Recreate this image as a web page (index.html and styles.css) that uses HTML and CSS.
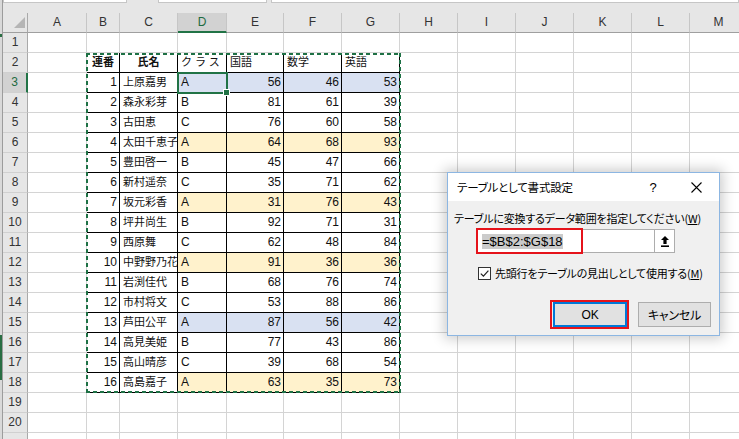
FILE: index.html
```html
<!DOCTYPE html>
<html lang="ja">
<head>
<meta charset="utf-8">
<title>テーブルとして書式設定</title>
<link rel="stylesheet" href="styles.css">
</head>
<body>
<div class="app">
  <div class="strip"></div>
  <div class="main">
    <div class="top">
      <div class="fbox fb1"></div>
      <div class="fbox fb2"></div>
      <div class="fbox fb3"></div>
    </div>
    <div class="sheet">
      <div class="row">
        <div class="corner"><svg width="11" height="11" viewBox="0 0 11 11"><path d="M11 0V11H0Z" fill="#b5b5b5"/></svg></div>
        <div class="ch">A</div><div class="ch">B</div><div class="ch">C</div><div class="ch sel">D</div><div class="ch">E</div><div class="ch">F</div><div class="ch">G</div><div class="ch">H</div><div class="ch">I</div><div class="ch">J</div><div class="ch">K</div><div class="ch">L</div><div class="ch">M</div>
      </div>
      <div class="row"><div class="rh">1</div><div class="c"></div><div class="c"></div><div class="c"></div><div class="c"></div><div class="c"></div><div class="c"></div><div class="c"></div><div class="c"></div><div class="c"></div><div class="c"></div><div class="c"></div><div class="c"></div><div class="c"></div></div>
      <div class="row"><div class="rh">2</div><div class="c"></div><div class="t j b">連番</div><div class="t j b">氏名</div><div class="t j k">クラス</div><div class="t j">国語</div><div class="t j">数学</div><div class="t j">英語</div><div class="c"></div><div class="c"></div><div class="c"></div><div class="c"></div><div class="c"></div><div class="c"></div></div>
      <div class="row"><div class="rh sel">3</div><div class="c"></div><div class="t n">1</div><div class="t j">上原嘉男</div><div class="t bl">A</div><div class="t n bl">56</div><div class="t n bl">46</div><div class="t n bl">53</div><div class="c"></div><div class="c"></div><div class="c"></div><div class="c"></div><div class="c"></div><div class="c"></div></div>
      <div class="row"><div class="rh">4</div><div class="c"></div><div class="t n">2</div><div class="t j">森永彩芽</div><div class="t">B</div><div class="t n">81</div><div class="t n">61</div><div class="t n">39</div><div class="c"></div><div class="c"></div><div class="c"></div><div class="c"></div><div class="c"></div><div class="c"></div></div>
      <div class="row"><div class="rh">5</div><div class="c"></div><div class="t n">3</div><div class="t j">古田恵</div><div class="t">C</div><div class="t n">76</div><div class="t n">60</div><div class="t n">58</div><div class="c"></div><div class="c"></div><div class="c"></div><div class="c"></div><div class="c"></div><div class="c"></div></div>
      <div class="row"><div class="rh">6</div><div class="c"></div><div class="t n">4</div><div class="t j">太田千恵子</div><div class="t or">A</div><div class="t n or">64</div><div class="t n or">68</div><div class="t n or">93</div><div class="c"></div><div class="c"></div><div class="c"></div><div class="c"></div><div class="c"></div><div class="c"></div></div>
      <div class="row"><div class="rh">7</div><div class="c"></div><div class="t n">5</div><div class="t j">豊田啓一</div><div class="t">B</div><div class="t n">45</div><div class="t n">47</div><div class="t n">66</div><div class="c"></div><div class="c"></div><div class="c"></div><div class="c"></div><div class="c"></div><div class="c"></div></div>
      <div class="row"><div class="rh">8</div><div class="c"></div><div class="t n">6</div><div class="t j">新村遥奈</div><div class="t">C</div><div class="t n">35</div><div class="t n">71</div><div class="t n">62</div><div class="c"></div><div class="c"></div><div class="c"></div><div class="c"></div><div class="c"></div><div class="c"></div></div>
      <div class="row"><div class="rh">9</div><div class="c"></div><div class="t n">7</div><div class="t j">坂元彩香</div><div class="t or">A</div><div class="t n or">31</div><div class="t n or">76</div><div class="t n or">43</div><div class="c"></div><div class="c"></div><div class="c"></div><div class="c"></div><div class="c"></div><div class="c"></div></div>
      <div class="row"><div class="rh">10</div><div class="c"></div><div class="t n">8</div><div class="t j">坪井尚生</div><div class="t">B</div><div class="t n">92</div><div class="t n">71</div><div class="t n">31</div><div class="c"></div><div class="c"></div><div class="c"></div><div class="c"></div><div class="c"></div><div class="c"></div></div>
      <div class="row"><div class="rh">11</div><div class="c"></div><div class="t n">9</div><div class="t j">西原舞</div><div class="t">C</div><div class="t n">62</div><div class="t n">48</div><div class="t n">84</div><div class="c"></div><div class="c"></div><div class="c"></div><div class="c"></div><div class="c"></div><div class="c"></div></div>
      <div class="row"><div class="rh">12</div><div class="c"></div><div class="t n">10</div><div class="t j">中野野乃花</div><div class="t or">A</div><div class="t n or">91</div><div class="t n or">36</div><div class="t n or">36</div><div class="c"></div><div class="c"></div><div class="c"></div><div class="c"></div><div class="c"></div><div class="c"></div></div>
      <div class="row"><div class="rh">13</div><div class="c"></div><div class="t n">11</div><div class="t j">岩渕佳代</div><div class="t">B</div><div class="t n">68</div><div class="t n">76</div><div class="t n">74</div><div class="c"></div><div class="c"></div><div class="c"></div><div class="c"></div><div class="c"></div><div class="c"></div></div>
      <div class="row"><div class="rh">14</div><div class="c"></div><div class="t n">12</div><div class="t j">市村将文</div><div class="t">C</div><div class="t n">53</div><div class="t n">88</div><div class="t n">86</div><div class="c"></div><div class="c"></div><div class="c"></div><div class="c"></div><div class="c"></div><div class="c"></div></div>
      <div class="row"><div class="rh">15</div><div class="c"></div><div class="t n">13</div><div class="t j">芦田公平</div><div class="t bl">A</div><div class="t n bl">87</div><div class="t n bl">56</div><div class="t n bl">42</div><div class="c"></div><div class="c"></div><div class="c"></div><div class="c"></div><div class="c"></div><div class="c"></div></div>
      <div class="row"><div class="rh">16</div><div class="c"></div><div class="t n">14</div><div class="t j">高見美姫</div><div class="t">B</div><div class="t n">77</div><div class="t n">43</div><div class="t n">86</div><div class="c"></div><div class="c"></div><div class="c"></div><div class="c"></div><div class="c"></div><div class="c"></div></div>
      <div class="row"><div class="rh">17</div><div class="c"></div><div class="t n">15</div><div class="t j">高山晴彦</div><div class="t">C</div><div class="t n">39</div><div class="t n">68</div><div class="t n">54</div><div class="c"></div><div class="c"></div><div class="c"></div><div class="c"></div><div class="c"></div><div class="c"></div></div>
      <div class="row"><div class="rh">18</div><div class="c"></div><div class="t n">16</div><div class="t j">高島嘉子</div><div class="t or">A</div><div class="t n or">63</div><div class="t n or">35</div><div class="t n or">73</div><div class="c"></div><div class="c"></div><div class="c"></div><div class="c"></div><div class="c"></div><div class="c"></div></div>
      <div class="row"><div class="rh">19</div><div class="c"></div><div class="c"></div><div class="c"></div><div class="c"></div><div class="c"></div><div class="c"></div><div class="c"></div><div class="c"></div><div class="c"></div><div class="c"></div><div class="c"></div><div class="c"></div><div class="c"></div></div>
      <div class="row"><div class="rh">20</div><div class="c"></div><div class="c"></div><div class="c"></div><div class="c"></div><div class="c"></div><div class="c"></div><div class="c"></div><div class="c"></div><div class="c"></div><div class="c"></div><div class="c"></div><div class="c"></div><div class="c"></div></div>
      <div class="row"><div class="rh"></div><div class="c"></div><div class="c"></div><div class="c"></div><div class="c"></div><div class="c"></div><div class="c"></div><div class="c"></div><div class="c"></div><div class="c"></div><div class="c"></div><div class="c"></div><div class="c"></div><div class="c"></div></div>

      <div class="ov">
        <div class="ants"></div>
        <div class="act"></div>
      </div>
    </div>
  </div>

  <div class="dlg">
    <div class="dlg-title">
      <span class="dlg-ttl">テーブルとして書式設定</span>
      <span class="dlg-q">?</span>
      <span class="dlg-x"><svg width="11" height="11" viewBox="0 0 11 11"><path d="M0.5 0.5L10.5 10.5M10.5 0.5L0.5 10.5" stroke="#000" stroke-width="1.1"/></svg></span>
    </div>
    <div class="dlg-body">
      <div class="dlg-label">テーブルに変換するデータ範囲を指定してください(<u>W</u>)</div>
      <div class="rng">
        <div class="rng-field"><span class="rng-sel">=$B$2:$G$18</span></div>
        <div class="rng-btn"><svg width="8" height="11" viewBox="0 0 8 11"><path d="M4 0L8 4H5.6V8H2.4V4H0Z" fill="#000"/><rect x="0" y="9.4" width="8" height="1.6" fill="#000"/></svg></div>
        <span class="mark mark-rng"></span>
      </div>
      <div class="chk">
        <span class="box"><svg width="11" height="11" viewBox="0 0 11 11"><path d="M1.8 5.6L4.4 8.2L9.4 2.6" fill="none" stroke="#222" stroke-width="1.2"/></svg></span>
        <span>先頭行をテーブルの見出しとして使用する(<u>M</u>)</span>
      </div>
      <div class="btns">
        <div class="btn ok">OK<span class="mark mark-ok"></span></div>
        <div class="btn">キャンセル</div>
      </div>
    </div>
  </div>
</div>
</body>
</html>
```

FILE: styles.css
```css
body {
  margin: 0;
  background: #fff;
}

.app {
  --cols: 25px 59px 33px 58px 49px 57px 58px 58px 58px 58px 58px 58px 58px 58px;
  position: relative;
  width: 739px;
  height: 439px;
  overflow: hidden;
  display: flex;
  background: #fff;
  font-family: "Liberation Sans", "Noto Sans CJK JP", sans-serif;
}

.strip {
  flex: none;
  width: 2px;
  border-right: 1px solid #9c9c9c;
  background: linear-gradient(to bottom, #d9d9d9 0 34px, #2a6e43 34px 37px, #d9d9d9 37px 335px, #2a6e43 335px 380px, #d9d9d9 380px);
}

.main {
  flex: 1;
  min-width: 0;
  display: flex;
  flex-direction: column;
}

.top {
  flex: none;
  height: 13px;
  background: #e6e6e6;
  display: flex;
  align-items: flex-start;
}

.fbox {
  height: 2px;
  background: #fff;
  border: 1px solid #c6c6c6;
  border-top: none;
}

.fb1 { width: 122px; }
.fb2 { width: 107px; margin-left: 31px; }
.fb3 { flex: 1; margin-left: 4px; }

.sheet {
  position: relative;
}

.row {
  display: grid;
  grid-template-columns: var(--cols);
  height: 20px;
}

.row > div {
  box-sizing: border-box;
  white-space: nowrap;
  overflow: hidden;
}

.corner {
  background: #e6e6e6;
  border-right: 1px solid #a9a9a9;
  border-bottom: 1px solid #9f9f9f;
  display: flex;
  align-items: flex-end;
  justify-content: flex-end;
  padding: 0 2px 4px 0;
}

.ch {
  background: #e6e6e6;
  border-right: 1px solid #c6c6c6;
  border-bottom: 1px solid #9f9f9f;
  text-align: center;
  font-size: 12px;
  line-height: 19px;
  color: #333;
}

.ch.sel {
  background: #d2d2d2;
  border-bottom: 2px solid #217346;
  color: #1e6b41;
  line-height: 18px;
}

.rh {
  background: #e6e6e6;
  border-right: 1px solid #a9a9a9;
  border-bottom: 1px solid #d0d0d0;
  text-align: center;
  font-size: 12px;
  line-height: 19px;
  color: #333;
}

.rh.sel {
  background: #d2d2d2;
  border-right: 2px solid #217346;
  color: #1e6b41;
}

.c,
.t {
  border-right: 1px solid #d4d4d4;
  border-bottom: 1px solid #d4d4d4;
  padding: 0 3px;
  font-size: 12px;
  line-height: 19px;
  color: #111;
}

.t {
  border-right-color: #000;
  border-bottom-color: #000;
}

.j { font-size: 11px; }
.b { font-weight: bold; text-align: center; }
.k { letter-spacing: 3px; }
.n { text-align: right; padding-right: 2px; }
.bl { background: #d9e1f2; }
.or { background: #fff2cc; }

.ov {
  position: absolute;
  top: 0;
  left: 0;
  display: grid;
  grid-template-columns: var(--cols);
  grid-template-rows: repeat(22, 20px);
  pointer-events: none;
}

.ants {
  grid-column: 3 / 9;
  grid-row: 3 / 20;
  margin-left: -1px;
  margin-right: -1px;
  background:
    repeating-linear-gradient(90deg, #1e7145 0 4px, transparent 4px 7px) left top / 100% 2px no-repeat,
    repeating-linear-gradient(90deg, #1e7145 0 4px, transparent 4px 7px) left bottom / 100% 2px no-repeat,
    repeating-linear-gradient(180deg, #1e7145 0 4px, transparent 4px 7px) left top / 2px 100% no-repeat,
    repeating-linear-gradient(180deg, #1e7145 0 4px, transparent 4px 7px) right top / 2px 100% no-repeat;
}

.act {
  grid-column: 5 / 6;
  grid-row: 4 / 5;
  margin: -1px;
  border: 2px solid #217346;
  position: relative;
}

.act::after {
  content: "";
  position: absolute;
  right: -4px;
  bottom: -4px;
  width: 5px;
  height: 5px;
  background: #217346;
  border: 1px solid #fff;
}

/* dialog */
.dlg {
  position: absolute;
  left: 447px;
  top: 172px;
  width: 271px;
  height: 162px;
  border: 1px solid #8cb6e2;
  background: #f0f0f0;
  box-shadow: 0 0 12px 3px rgba(0, 0, 0, 0.2);
  font-family: "Noto Sans CJK JP", "Liberation Sans", sans-serif;
  font-feature-settings: "palt";
  font-size: 11px;
  letter-spacing: -0.2px;
  color: #000;
}

.dlg-title {
  height: 28px;
  background: #fff;
  display: flex;
  align-items: center;
}

.dlg-ttl {
  flex: 1;
  padding-left: 9px;
  font-size: 11.5px;
}

.dlg-q {
  width: 40px;
  text-align: center;
  font-family: "Liberation Sans", sans-serif;
  font-size: 13px;
}

.dlg-x {
  width: 46px;
  display: flex;
  justify-content: center;
}

.dlg-body {
  padding: 9px 0 0 6px;
}

.dlg-label {
  line-height: 16px;
  white-space: nowrap;
}

.rng {
  position: relative;
  display: flex;
  width: 198px;
  height: 24px;
  margin: 3px 0 0 23px;
}

.rng-field {
  flex: 1;
  background: #fff;
  border: 1px solid #adadad;
  border-right: none;
  display: flex;
  align-items: center;
  padding-left: 4px;
}

.rng-sel {
  background: #cbcbcb;
  font-family: "Liberation Sans", sans-serif;
  font-size: 13px;
  line-height: 15px;
  letter-spacing: 0;
}

.rng-btn {
  width: 19px;
  background: #fff;
  border: 1px solid #adadad;
  display: flex;
  align-items: center;
  justify-content: center;
}

.mark {
  position: absolute;
  border: 2px solid #e5131b;
  pointer-events: none;
}

.mark-rng {
  left: -1px;
  top: -1px;
  width: 103px;
  height: 22px;
}

.chk {
  display: flex;
  align-items: center;
  gap: 4px;
  height: 18px;
  margin: 11px 0 0 24px;
  white-space: nowrap;
}

.box {
  width: 11px;
  height: 11px;
  border: 1px solid #333;
  background: #fff;
  display: flex;
}

.btns {
  display: flex;
  justify-content: flex-end;
  gap: 11px;
  margin-top: 20px;
  padding-right: 8px;
}

.btn {
  position: relative;
  box-sizing: border-box;
  width: 73px;
  height: 25px;
  border: 1px solid #adadad;
  background: #e1e1e1;
  display: flex;
  align-items: center;
  justify-content: center;
  font-size: 12px;
}

.btn.ok {
  width: 74px;
  border: 2px solid #0078d7;
  font-family: "Liberation Sans", sans-serif;
}

.mark-ok {
  left: -5px;
  right: -4px;
  top: -4px;
  bottom: -4px;
}
```
